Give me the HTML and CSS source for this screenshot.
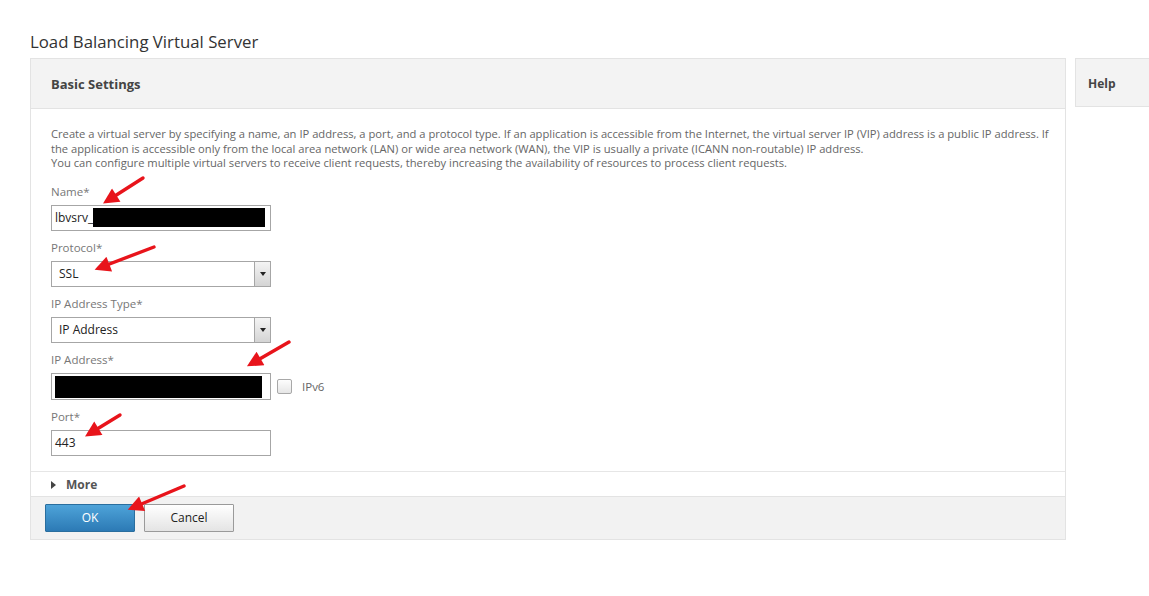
FILE: index.html
```html
<!DOCTYPE html>
<html lang="en">
<head>
  <meta charset="UTF-8">
  <title>Load Balancing Virtual Server</title>
  <link rel="stylesheet" href="styles.css">
</head>
<body>
  <div class="page">
    <h1 class="page-title">Load Balancing Virtual Server</h1>

    <div class="columns">
      <!-- Main settings panel -->
      <div class="panel">
        <div class="panel-head">Basic Settings</div>

        <div class="panel-body">
          <p class="intro">Create a virtual server by specifying a name, an IP address, a port, and a protocol type. If an application is accessible from the Internet, the virtual server IP (VIP) address is a public IP address. If<br>the application is accessible only from the local area network (LAN) or wide area network (WAN), the VIP is usually a private (ICANN non-routable) IP address.<br>You can configure multiple virtual servers to receive client requests, thereby increasing the availability of resources to process client requests.</p>

          <div class="field">
            <label>Name*</label>
            <div class="input">lbvsrv_<span class="redact redact-name"></span></div>
          </div>

          <div class="field">
            <label>Protocol*</label>
            <div class="input select">SSL<span class="drop"><span class="caret"></span></span></div>
          </div>

          <div class="field">
            <label>IP Address Type*</label>
            <div class="input select">IP Address<span class="drop"><span class="caret"></span></span></div>
          </div>

          <div class="field">
            <label>IP Address*</label>
            <div class="row">
              <div class="input tall"><span class="redact redact-ip"></span></div>
              <span class="check"></span>
              <span class="check-label">IPv6</span>
            </div>
          </div>

          <div class="field">
            <label>Port*</label>
            <div class="input">443</div>
          </div>
        </div>

        <div class="more"><span class="tri"></span>More</div>

        <div class="panel-foot">
          <button class="btn btn-ok">OK</button>
          <button class="btn btn-cancel">Cancel</button>
        </div>
      </div>

      <!-- Help side panel -->
      <div class="help">Help</div>
    </div>
  </div>

  <!-- Red annotation arrows -->
  <svg class="arrows" width="1149" height="596" viewBox="0 0 1149 596">
    <defs>
      <marker id="head" viewBox="0 0 10 10" refX="7" refY="5" markerWidth="5" markerHeight="4.6" orient="auto">
        <path d="M0 0L10 5L0 10z" fill="#e8141b"/>
      </marker>
    </defs>
    <g stroke="#e8141b" stroke-width="3.4" stroke-linecap="round" marker-end="url(#head)">
      <line x1="143" y1="178" x2="107" y2="201"/>
      <line x1="154" y1="247" x2="99" y2="268"/>
      <line x1="289" y1="342" x2="251" y2="364"/>
      <line x1="120" y1="415" x2="89" y2="434"/>
      <line x1="184" y1="486" x2="132" y2="508"/>
    </g>
  </svg>
</body>
</html>
```

FILE: styles.css
```css
/* General */
body {
  margin: 0;
  background: #fff;
  font-family: "Open Sans", Arial, sans-serif;
  color: #333;
  overflow: hidden;
}

.page {
  padding: 30px 0 0 30px;
}

.page-title {
  margin: 0 0 4px;
  font-size: 16.8px;
  font-weight: 400;
  line-height: 24px;
  color: #333;
}

.columns {
  display: flex;
  gap: 9px;
}

/* Main panel */
.panel {
  width: 1034px;
  flex-shrink: 0;
  border: 1px solid #e3e3e3;
}

.panel-head {
  height: 49px;
  line-height: 50px;
  padding-left: 20px;
  background: #f3f3f3;
  border-bottom: 1px solid #e3e3e3;
  font-size: 13px;
  font-weight: 700;
  color: #444;
}

.panel-body {
  padding: 18px 20px 15px;
}

.intro {
  margin: 0 0 13px;
  font-size: 11.2px;
  line-height: 14.5px;
  color: #666;
  white-space: nowrap;
}

.field label {
  display: block;
  font-size: 11.5px;
  line-height: 16px;
  color: #777;
  margin-bottom: 5px;
}

.field {
  margin-bottom: 9px;
}

.field:last-child {
  margin-bottom: 0;
}

.input {
  position: relative;
  box-sizing: border-box;
  width: 220px;
  height: 26px;
  border: 1px solid #a6a6a6;
  padding: 0 3px;
  display: flex;
  align-items: center;
  font-size: 12px;
  color: #222;
  background: #fff;
}

.input.select {
  padding-left: 7px;
}

.input.tall {
  height: 27px;
}

.redact {
  display: inline-block;
  background: #000;
}

.redact-name {
  width: 172px;
  height: 19px;
}

.redact-ip {
  width: 207px;
  height: 22px;
  margin-top: 2px;
}

/* Dropdown button */
.drop {
  position: absolute;
  right: 0;
  top: 0;
  bottom: 0;
  width: 15px;
  border-left: 1px solid #a6a6a6;
  background: linear-gradient(#f4f4f4, #d4d4d4);
  display: flex;
  align-items: center;
  justify-content: center;
}

.caret {
  width: 0;
  height: 0;
  border-left: 3.5px solid transparent;
  border-right: 3.5px solid transparent;
  border-top: 4px solid #222;
}

.row {
  display: flex;
  align-items: center;
}

.check {
  width: 13px;
  height: 13px;
  margin-left: 6px;
  border: 1px solid #a8a8a8;
  border-radius: 2px;
  background: linear-gradient(#fdfdfd, #e6e6e6);
}

.check-label {
  margin-left: 10px;
  font-size: 11.5px;
  color: #666;
}

/* More row */
.more {
  height: 25px;
  border-top: 1px solid #e6e6e6;
  padding-left: 20px;
  padding-top: 2px;
  box-sizing: border-box;
  font-size: 12px;
  font-weight: 700;
  color: #555;
  display: flex;
  align-items: center;
}

.tri {
  width: 0;
  height: 0;
  border-top: 4.5px solid transparent;
  border-bottom: 4.5px solid transparent;
  border-left: 5px solid #444;
  margin-right: 10px;
}

/* Footer */
.panel-foot {
  height: 43px;
  background: #f2f2f2;
  border-top: 1px solid #e3e3e3;
  padding: 7px 0 0 14px;
  box-sizing: border-box;
  display: flex;
  gap: 9px;
  align-items: flex-start;
}

.btn {
  width: 90px;
  height: 28px;
  font-family: "Open Sans", Arial, sans-serif;
  font-size: 12px;
  border-radius: 1px;
  cursor: pointer;
}

.btn-ok {
  color: #fff;
  border: 1px solid #2a6e9e;
  background: linear-gradient(#4ea3d9, #2c7ab5);
}

.btn-cancel {
  color: #222;
  border: 1px solid #9a9a9a;
  background: linear-gradient(#ffffff, #e4e4e4);
}

/* Help panel */
.help {
  width: 90px;
  flex-shrink: 0;
  height: 49px;
  line-height: 49px;
  box-sizing: border-box;
  padding-left: 12px;
  background: #f3f3f3;
  border: 1px solid #e3e3e3;
  font-size: 12px;
  font-weight: 700;
  color: #444;
}

/* Annotation overlay */
.arrows {
  position: absolute;
  top: 0;
  left: 0;
  pointer-events: none;
}
```
